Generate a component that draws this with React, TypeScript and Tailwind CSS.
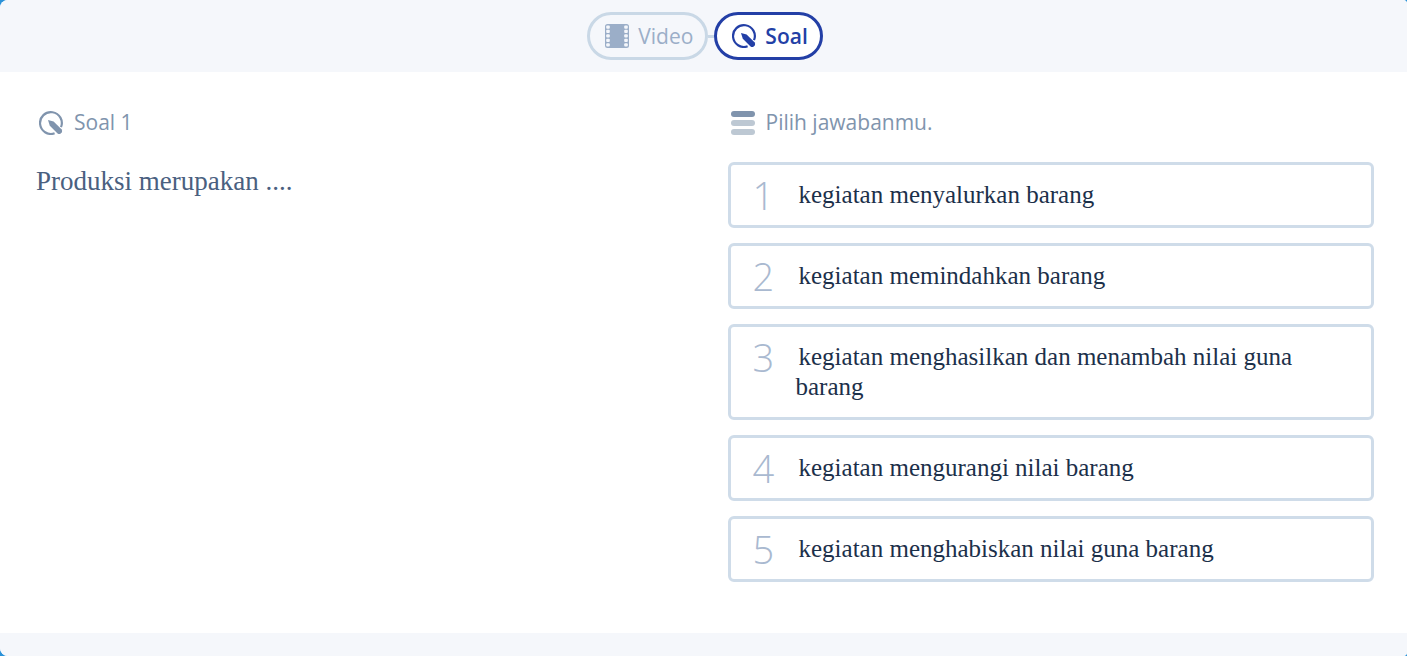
const options = [
  'kegiatan menyalurkan barang',
  'kegiatan memindahkan barang',
  'kegiatan menghasilkan dan menambah nilai guna barang',
  'kegiatan mengurangi nilai barang',
  'kegiatan menghabiskan nilai guna barang',
];

function FilmIcon() {
  const holes = [1.4, 5.7, 10.2, 14.7, 19.2];
  return (
    <svg width="24" height="24" viewBox="0 0 24 24" aria-hidden="true">
      <rect width="24" height="24" rx="2.5" fill="#9baec8" />
      {holes.map((y) => (
        <g key={y} fill="#f5f7fb">
          <rect x="1.2" y={y} width="3.6" height="3.4" rx="1" />
          <rect x="19.2" y={y} width="3.6" height="3.4" rx="1" />
        </g>
      ))}
    </svg>
  );
}

function QuizIcon() {
  return (
    <svg width="24" height="24" viewBox="0 0 24 24" fill="none" aria-hidden="true">
      <path d="M22 16.2A10.9 10.9 0 1 0 15.6 22.3" stroke="currentColor" strokeWidth="2.2" />
      <path
        d="M9 9L14.6 10.6L22.5 18.2Q23.4 19.2 23 21.2L21.4 22.8Q19.8 23.5 18.6 22.4L10.8 14.8Z"
        fill="currentColor"
      />
    </svg>
  );
}

function ListIcon() {
  return (
    <svg width="24" height="24" viewBox="0 0 24 24" aria-hidden="true">
      <rect width="24" height="6" rx="3" fill="#8094ad" />
      <rect y="9" width="24" height="6" rx="3" fill="#bdc8d3" />
      <rect y="18" width="24" height="6" rx="3" fill="#bdc8d3" />
    </svg>
  );
}

export default function App() {
  return (
    <div className="min-h-screen bg-[#2b92d8] font-['Open_Sans','Noto_Sans',sans-serif]">
      <div className="flex min-h-screen flex-col overflow-hidden rounded-l-lg rounded-r-sm bg-white">
        <header className="flex h-18 items-center justify-center bg-[#f5f7fb] pl-[3px]">
          <nav className="flex items-center text-[21px] leading-8">
            <button
              type="button"
              className="flex h-12 items-center gap-[9px] rounded-full border-3 border-[#c9d8e6] pr-3 pl-[15px] font-medium text-[#9baec8]"
            >
              <FilmIcon />
              Video
            </button>
            <span className="h-[3px] w-1.5 bg-[#c9d8e6]" />
            <button
              type="button"
              aria-current="step"
              className="flex h-12 items-center gap-[9px] rounded-full border-3 border-[#233fa6] bg-white pr-3 pl-[15px] font-semibold text-[#233fa6]"
            >
              <QuizIcon />
              Soal
            </button>
          </nav>
        </header>

        <main className="grid flex-1 grid-cols-2 pt-9 pb-12">
          <section className="pr-6 pl-9">
            <h1 className="flex h-[30px] items-center gap-[11px] pl-[3px] text-[21px] text-[#8094ad]">
              <QuizIcon />
              Soal 1
            </h1>
            <p className="mt-[26px] font-['Georgia','Liberation_Serif',serif] text-[27px] leading-[34px] text-[#4a6080]">
              Produksi merupakan ....
            </p>
          </section>

          <section className="pr-[33px] pl-6">
            <h2 className="flex h-[30px] items-center gap-[11px] pl-[3px] text-[21px] text-[#8094ad]">
              <ListIcon />
              Pilih jawabanmu.
            </h2>
            <ol className="mt-6 flex flex-col gap-[15px]">
              {options.map((text, i) => (
                <li key={text}>
                  <button
                    type="button"
                    className="flex w-full items-start rounded-md border-3 border-[#cfdce9] bg-white py-[15px] pr-12 pl-[22px] text-left"
                  >
                    <span className="w-[43px] shrink-0 text-[38px] leading-[30px] font-light text-[#a9b9d0]">
                      {i + 1}
                    </span>
                    <span className="indent-[3px] font-['Georgia','Liberation_Serif',serif] text-[25px] leading-[30px] text-[#1c304a]">
                      {text}
                    </span>
                  </button>
                </li>
              ))}
            </ol>
          </section>
        </main>

        <footer className="h-[23px] bg-[#f5f7fb]" />
      </div>
    </div>
  );
}
